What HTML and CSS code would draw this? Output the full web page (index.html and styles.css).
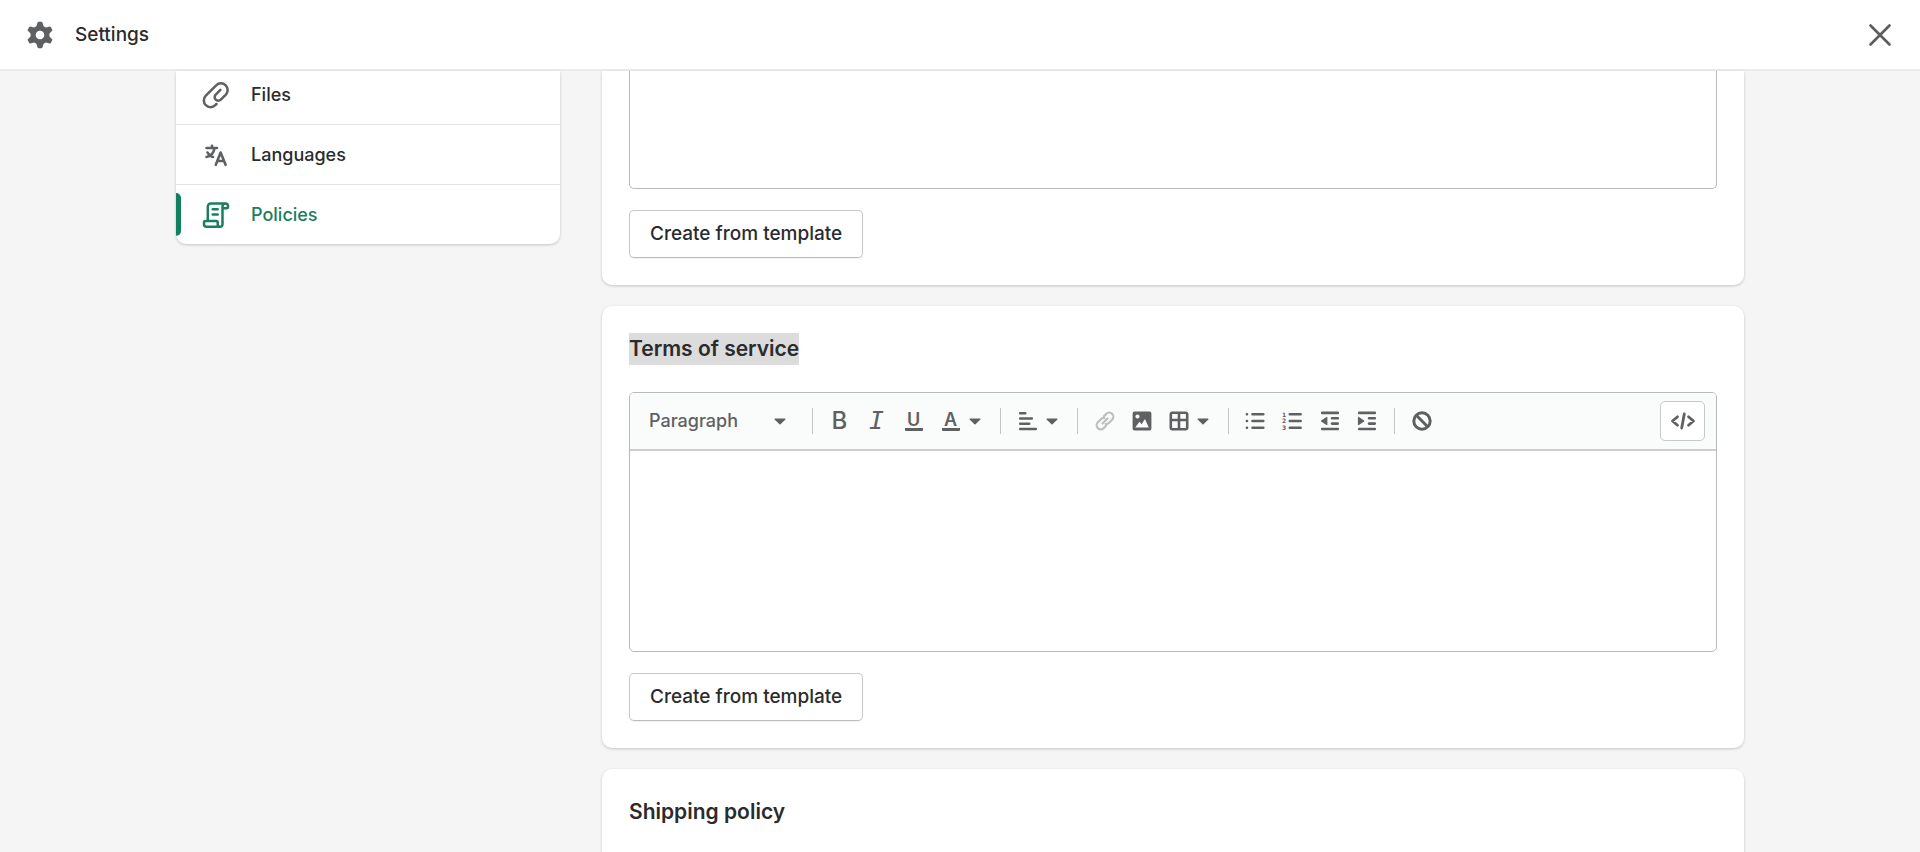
FILE: index.html
```html
<!DOCTYPE html>
<html lang="en">
<head>
<meta charset="utf-8">
<meta name="viewport" content="width=device-width, initial-scale=1">
<title>Settings - Policies</title>
<link rel="stylesheet" href="styles.css">
</head>
<body>
<svg class="defs" aria-hidden="true">
  <symbol id="caret" viewBox="0 0 12 7"><path d="M1 .5h10a.6.6 0 0 1 .4 1L6.500 6.200a.8.8 0 0 1-1 0L.6 1.500A.6.6 0 0 1 1 .5z" fill="currentColor"/></symbol>
</svg>

<header class="topbar">
  <svg class="topbar-icon" viewBox="0 0 28 28" aria-hidden="true">
    <mask id="hub"><rect width="28" height="28" fill="#fff"/><circle cx="14" cy="14" r="4.300" fill="#000"/></mask>
    <g mask="url(#hub)" fill="currentColor" stroke="currentColor" stroke-width="2" stroke-linejoin="round">
      <circle cx="14" cy="14" r="8.500"/>
      <path id="tooth" d="M12.500 1.700h3L17 7h-6z"/>
      <use href="#tooth" transform="rotate(60 14 14)"/>
      <use href="#tooth" transform="rotate(120 14 14)"/>
      <use href="#tooth" transform="rotate(180 14 14)"/>
      <use href="#tooth" transform="rotate(240 14 14)"/>
      <use href="#tooth" transform="rotate(300 14 14)"/>
    </g>
  </svg>
  <h1 class="topbar-title">Settings</h1>
  <button class="close" type="button" aria-label="Close">
    <svg viewBox="0 0 24 24" fill="none" stroke="currentColor" stroke-width="2.600" stroke-linecap="round"><path d="M2.500 2.500l19 19M21.500 2.500l-19 19"/></svg>
  </button>
</header>

<main class="page">
  <nav class="nav" aria-label="Settings">
    <a class="nav-item" href="#files">
      <svg class="nav-icon" viewBox="0 0 28 28" fill="none" stroke="currentColor" stroke-width="2.500" stroke-linecap="round" stroke-linejoin="round" aria-hidden="true"><path d="M14.500 23l-1.200 1.200a6.700 6.700 0 0 1-9.500-9.500L14.200 4.300a6.700 6.700 0 0 1 9.500 9.500l-4.900 4.900a3.600 3.600 0 0 1-5.100-5.100l4.700-4.700"/></svg>
      Files
    </a>
    <a class="nav-item" href="#languages">
      <svg class="nav-icon" viewBox="0 0 28 28" fill="none" stroke="currentColor" stroke-width="2.600" stroke-linecap="round" stroke-linejoin="round" aria-hidden="true"><path d="M4.500 7h10.500M10 4.700V7M12.500 7.200c-.8 4.500-3.600 8-8 8.800M5.500 11.500c1.200 2.300 3 3.800 5.500 4.500M13.800 23.800l4.800-12.300L23.600 23.800M15.700 20h6.200"/></svg>
      Languages
    </a>
    <a class="nav-item nav-item-current" href="#policies" aria-current="page">
      <svg class="nav-icon" viewBox="0 0 28 28" fill="none" stroke="currentColor" stroke-width="2.500" stroke-linecap="round" stroke-linejoin="round" aria-hidden="true"><path d="M5.800 19.500V5.500a3 3 0 0 1 3-3h14.700M23.500 2.500a3 3 0 0 0-3 3v18a2.300 2.300 0 0 1-2.300 2.300H4.500a2.500 2.500 0 0 1-2.500-2.500v-1.800c0-1 .5-1.500 1.500-1.500h10.700c1 0 1.500.5 1.500 1.500v1.800a2.500 2.500 0 0 0 2.500 2.500M23.500 2.500a2.500 2.500 0 0 1 2.500 2.500v.7c0 1-.5 1.500-1.500 1.500h-4M10.700 8.200h5M10.700 13.500h5"/></svg>
      Policies
    </a>
  </nav>

  <div class="cards">
    <section class="card card-scrolled" aria-label="Privacy policy">
      <div class="editor editor-scrolled"><textarea class="editor-body" aria-label="Privacy policy"></textarea></div>
      <button class="btn" type="button">Create from template</button>
    </section>

    <section class="card">
      <h2 class="card-title"><span class="selected">Terms of service</span></h2>
      <div class="editor">
        <div class="toolbar" role="toolbar" aria-label="Formatting">
          <div class="format">
            <select class="format-select" aria-label="Text format"><option>Paragraph</option></select>
            <svg class="caret format-caret" aria-hidden="true"><use href="#caret"/></svg>
          </div>
          <div class="group">
            <button class="tool" type="button" aria-label="Bold"><span class="glyph glyph-bold">B</span></button>
            <button class="tool" type="button" aria-label="Italic"><span class="glyph glyph-italic">I</span></button>
            <button class="tool" type="button" aria-label="Underline"><span class="glyph glyph-lined">U</span></button>
            <button class="tool tool-menu" type="button" aria-label="Text color"><span class="glyph glyph-lined">A</span><svg class="caret" aria-hidden="true"><use href="#caret"/></svg></button>
          </div>
          <div class="group">
            <button class="tool tool-menu" type="button" aria-label="Alignment">
              <svg class="tool-icon" viewBox="0 0 20 20" fill="none" stroke="currentColor" stroke-width="2.600" stroke-linecap="round"><path d="M2.200 2.200h5M2.200 7.500h11.600M2.200 12.800h9M2.200 18h15.600"/></svg>
              <svg class="caret" aria-hidden="true"><use href="#caret"/></svg>
            </button>
          </div>
          <div class="group">
            <button class="tool" type="button" aria-label="Insert link" disabled>
              <svg class="tool-icon" viewBox="0 0 20 20" fill="none" stroke="currentColor" stroke-width="2.200" stroke-linecap="round"><path d="M7.500 12.500l5-5M9 5.200l2.300-2.300a4 4 0 0 1 5.800 5.800l-3.300 3.300c-.8.8-2 1.200-3.100 1M11 14.800l-2.300 2.300a4 4 0 0 1-5.800-5.800L6.200 8c.8-.8 2-1.200 3.100-1"/></svg>
            </button>
            <button class="tool" type="button" aria-label="Insert image">
              <svg class="tool-icon" viewBox="0 0 20 20"><path fill="currentColor" fill-rule="evenodd" d="M2.500.6h15a1.900 1.900 0 0 1 1.900 1.900v15a1.900 1.900 0 0 1-1.900 1.900h-15A1.900 1.900 0 0 1 .6 17.500v-15A1.900 1.900 0 0 1 2.500.6zM5.500 3.400a2.100 2.100 0 1 0 0 4.200 2.100 2.100 0 0 0 0-4.200zM3.200 16.500h13.600l-3.500-7.700c-.2-.5-.8-.5-1 0l-2.500 4.400-1.900-1.900c-.3-.3-.7-.3-1 .1z"/></svg>
            </button>
            <button class="tool tool-menu" type="button" aria-label="Insert table">
              <svg class="tool-icon" viewBox="0 0 20 20" fill="none" stroke="currentColor" stroke-width="2.600"><rect x="1.800" y="1.800" width="16.400" height="16.400" rx="1.600"/><path d="M10 2v16M2 9h16"/></svg>
              <svg class="caret" aria-hidden="true"><use href="#caret"/></svg>
            </button>
          </div>
          <div class="group group-plain">
            <button class="tool" type="button" aria-label="Bulleted list">
              <svg class="tool-icon" viewBox="0 0 20 20" fill="none" stroke="currentColor" stroke-width="2.600" stroke-linecap="round"><path d="M6.500 3.300h10.800M6.500 10h10.800M6.500 16.700h10.800M.9 3.300H1M.9 10H1M.9 16.700H1"/></svg>
            </button>
            <button class="tool" type="button" aria-label="Numbered list">
              <svg class="tool-icon" viewBox="0 0 20 20"><path fill="none" stroke="currentColor" stroke-width="2.600" stroke-linecap="round" d="M6.800 3.300h10.800M6.800 10h10.800M6.800 16.700h10.800"/><g class="digits"><text x="-1" y="5.500">1</text><text x="-1" y="12.200">2</text><text x="-1" y="18.900">3</text></g></svg>
            </button>
            <button class="tool" type="button" aria-label="Outdent">
              <svg class="tool-icon" viewBox="0 0 20 20" fill="currentColor" stroke="currentColor" stroke-width="2.600" stroke-linecap="round"><path d="M2.200 1.900h15.600M12 7.300h5.800M12 12.600h5.800M2.200 18h15.600"/><path d="M6.800 6.500v7L1.500 10z" stroke-width="1.200" stroke-linejoin="round"/></svg>
            </button>
            <button class="tool" type="button" aria-label="Indent">
              <svg class="tool-icon" viewBox="0 0 20 20" fill="currentColor" stroke="currentColor" stroke-width="2.600" stroke-linecap="round"><path d="M2.200 1.900h15.600M12 7.300h5.800M12 12.600h5.800M2.200 18h15.600"/><path d="M1.500 6.500v7l5.300-3.500z" stroke-width="1.200" stroke-linejoin="round"/></svg>
            </button>
          </div>
          <div class="group group-plain">
            <button class="tool" type="button" aria-label="Clear formatting">
              <svg class="tool-icon" viewBox="0 0 20 20" fill="none" stroke="currentColor" stroke-width="3"><circle cx="10" cy="10" r="8.200"/><path d="M4.300 4.300l11.400 11.400"/></svg>
            </button>
          </div>
          <button class="code" type="button" aria-label="Show HTML">
            <svg viewBox="0 0 26 18" fill="none" stroke="currentColor" stroke-width="2.800" stroke-linecap="round" stroke-linejoin="round"><path d="M7.500 4.800L2.500 9l5 4.200M18.500 4.800l5 4.200-5 4.200M14.300 2l-2.600 14"/></svg>
          </button>
        </div>
        <textarea class="editor-body" aria-label="Terms of service"></textarea>
      </div>
      <button class="btn" type="button">Create from template</button>
    </section>

    <section class="card">
      <h2 class="card-title">Shipping policy</h2>
      <div class="editor"><textarea class="editor-body" aria-label="Shipping policy"></textarea></div>
    </section>
  </div>
</main>
</body>
</html>
```
FILE: styles.css
```css
* { box-sizing: border-box; }

body {
  display: flex;
  flex-direction: column;
  height: 100vh;
  margin: 0;
  overflow: hidden;
  background: #f5f5f5;
  color: #2a2b2d;
  font: 500 18px/24px Inter, "Liberation Sans", sans-serif;
}

svg { display: block; }
.defs { position: absolute; width: 0; height: 0; }

button, select, textarea {
  margin: 0;
  padding: 0;
  border: 0;
  background: none;
  color: inherit;
  font: inherit;
}

/* Top bar */
.topbar {
  display: flex;
  flex: none;
  align-items: center;
  gap: 21px;
  padding: 21px 26px 20px;
  border-bottom: 2px solid #ebebeb;
  background: #fff;
}
.topbar-icon { width: 28px; height: 28px; color: #5f6062; }
.topbar-title { margin: 0; font: inherit; font-size: 19px; }
.close { margin-left: auto; padding: 2px; color: #5c5c5e; }
.close svg { width: 24px; height: 24px; }

/* Page columns */
.page {
  display: grid;
  flex: 1;
  grid-template-columns: 384px 1fr;
  align-items: start;
  gap: 42px;
  width: 100%;
  max-width: 1568px;
  min-height: 0;
  margin: 0 auto;
}

/* Side navigation */
.nav {
  overflow: hidden;
  border-radius: 0 0 10px 10px;
  background: #fff;
  box-shadow: 0 1px 3px rgba(0, 0, 0, .2);
}
.nav-item {
  position: relative;
  display: flex;
  align-items: center;
  gap: 21px;
  padding: 16px 26px 15px;
  border-top: 1px solid #e3e3e4;
  color: inherit;
  text-decoration: none;
}
.nav-item:first-child { padding-top: 10px; border-top: 0; }
.nav-icon { width: 28px; height: 28px; color: #5f6062; }
.nav-item-current, .nav-item-current .nav-icon { color: #1a7f5e; }
.nav-item-current::before {
  content: "";
  position: absolute;
  top: 8px;
  bottom: 8px;
  left: 0;
  width: 5px;
  border-radius: 0 5px 5px 0;
  background: #12805f;
}

/* Cards */
.cards { display: grid; gap: 21px; min-width: 0; }
.card {
  padding: 27px;
  border-radius: 10px;
  background: #fff;
  box-shadow: 0 1px 3px rgba(0, 0, 0, .2);
}
.card-scrolled { padding-top: 0; border-radius: 0 0 10px 10px; }
.card-title { margin: 0 0 27px; font-size: 21px; font-weight: 600; line-height: 32px; }
.selected { display: inline-block; background: #dcdcdc; }

.btn {
  margin-top: 21px;
  padding: 11px 20px;
  border: 1px solid #c6c7c9;
  border-bottom-color: #bbbcbe;
  border-radius: 5px;
  box-shadow: 0 1px 1px rgba(0, 0, 0, .06);
  font-size: 19px;
  line-height: 24px;
}

/* Rich text editor */
.editor { overflow: hidden; border: 1px solid #b8b9bb; border-radius: 5px; }
.editor-body { display: block; width: 100%; height: 200px; padding: 16px; outline: 0; resize: none; }
.editor-scrolled { border-top: 0; border-radius: 0 0 5px 5px; }
.editor-scrolled .editor-body { height: 117px; }

.toolbar {
  display: flex;
  align-items: center;
  padding: 8px 11px 8px 19px;
  border-bottom: 2px solid #cdcecf;
  background: #fafbfb;
  color: #5f6062;
}
.format { display: grid; width: 137px; margin-right: 26px; align-items: center; }
.format-select { grid-area: 1 / 1; width: 100%; appearance: none; }
.format-caret { grid-area: 1 / 1; justify-self: end; pointer-events: none; }
.caret { width: 12px; height: 7px; }

.group {
  display: flex;
  align-items: center;
  height: 26px;
  padding: 0 19px 0 8px;
  border-left: 1px solid #c3c4c6;
}
.group-plain { padding-right: 9px; }
.tool { display: grid; width: 37px; height: 26px; place-items: center; }
.tool-menu { display: grid; grid-template-columns: 37px 12px; width: 49px; }
.tool-icon { width: 20px; height: 20px; overflow: visible; }
.tool:disabled { color: #bdbec0; }
.digits { fill: currentColor; font: 700 6px "DejaVu Sans", sans-serif; }

.glyph { display: block; line-height: 26px; }
.glyph-bold { font-size: 24px; font-weight: 500; }
.glyph-italic { font-family: "DejaVu Sans Mono", monospace; font-size: 25px; font-style: italic; font-weight: 400; }
.glyph-lined { width: 18px; border-bottom: 3px solid; border-radius: 1px; font-size: 18px; font-weight: 600; line-height: 16px; text-align: center; }

.code {
  display: grid;
  width: 45px;
  height: 40px;
  margin-left: auto;
  place-items: center;
  border: 1px solid #c6c7c9;
  border-radius: 5px;
  background: #fff;
}
.code svg { width: 26px; height: 18px; }
```
